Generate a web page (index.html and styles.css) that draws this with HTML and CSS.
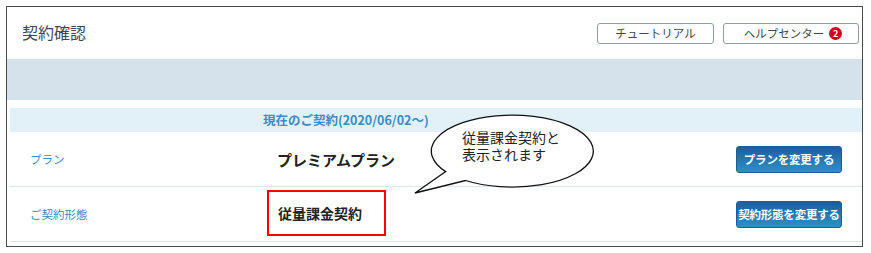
FILE: index.html
```html
<!DOCTYPE html>
<html lang="ja">
<head>
<meta charset="utf-8">
<title>契約確認</title>
<link rel="stylesheet" href="styles.css">
</head>
<body>
<div class="panel">
  <div class="top">
    <h1 class="title">契約確認</h1>
    <div class="actions">
      <button class="btn-outline tut">チュートリアル</button>
      <button class="btn-outline help">ヘルプセンター<span class="badge">2</span></button>
    </div>
  </div>
  <div class="band"></div>
  <div class="table">
    <div class="thead">現在のご契約(2020/06/02～)</div>
    <div class="row">
      <div class="label">プラン</div>
      <div class="value"><span class="plan">プレミアムプラン</span></div>
      <div class="cell-btn"><button class="btn-blue">プランを変更する</button></div>
    </div>
    <div class="row">
      <div class="label">ご契約形態</div>
      <div class="value"><span class="highlight">従量課金契約</span></div>
      <div class="cell-btn"><button class="btn-blue">契約形態を変更する</button></div>
    </div>
  </div>
  <svg class="bubble" width="192" height="88" viewBox="0 0 192 88">
    <path d="M 35.7,59.6 A 81 36 0 1 1 55.5,68.5 L 5,81 Z" fill="#fff" stroke="#111" stroke-width="1.3" stroke-linejoin="miter"/>
  </svg>
  <div class="bubble-text">従量課金契約と<br>表示されます</div>
</div>
</body>
</html>
```

FILE: styles.css
```css
* { box-sizing: border-box; }
html, body { margin: 0; padding: 0; background: #fff; }
body {
  padding: 6px 0 0 6px;
  font-family: "Noto Sans CJK JP", "Noto Sans", sans-serif;
}
.panel {
  position: relative;
  width: 857px;
  height: 241px;
  border: 1px solid #4a4a4a;
  background: #fff;
}
.top {
  height: 52px;
  display: flex;
  justify-content: space-between;
  align-items: flex-start;
  padding: 0 3px 0 15px;
}
.title {
  margin: 15px 0 0 0;
  font-size: 16px;
  line-height: 20px;
  font-weight: 400;
  color: #3a4856;
}
.actions {
  display: flex;
  gap: 9px;
  margin-top: 16px;
}
.btn-outline {
  height: 21px;
  border: 1px solid #8d9ba6;
  border-radius: 3px;
  background: #fff;
  color: #444;
  font-family: inherit;
  font-size: 11.5px;
  line-height: 19px;
  padding: 0;
  display: flex;
  align-items: center;
  justify-content: center;
}
.tut { width: 117px; }
.help { width: 136px; padding-left: 4px; }
.badge {
  display: inline-flex;
  align-items: center;
  justify-content: center;
  width: 13px;
  height: 13px;
  margin-left: 5px;
  border-radius: 50%;
  background: #d0021b;
  color: #fff;
  font-size: 9px;
  font-weight: 700;
  line-height: 1;
}
.band {
  height: 41px;
  background: #d6e2eb;
  margin-bottom: 8px;
}
.table { margin-left: 3px; }
.thead {
  height: 24px;
  line-height: 24px;
  background: #e2f0f8;
  padding-left: 253px;
  font-size: 12.5px;
  font-weight: 700;
  color: #3c8cc2;
}
.row {
  height: 55px;
  display: grid;
  grid-template-columns: 257px 1fr auto;
  align-items: center;
  border-bottom: 1px solid #dde6ea;
}
.label {
  padding-left: 20px;
  font-size: 11.5px;
  color: #3b8ac4;
}
.plan {
  margin-left: 10px;
  font-size: 15px;
  font-weight: 700;
  color: #222;
}
.highlight {
  display: inline-block;
  width: 119px;
  height: 46px;
  border: 2px solid #f00;
  padding: 11px 0 0 9px;
  font-size: 14px;
  line-height: 20px;
  font-weight: 700;
  color: #222;
  margin-top: -2px;
}
.cell-btn { padding-right: 20px; }
.btn-blue {
  width: 106px;
  height: 27px;
  padding: 0;
  border: 1px solid #1d5c97;
  border-radius: 3px;
  background: linear-gradient(#1f5d9d, #2d90c6);
  color: #fff;
  font-family: inherit;
  font-size: 11.5px;
  font-weight: 700;
  letter-spacing: -0.2px;
  white-space: nowrap;
}
.bubble {
  position: absolute;
  left: 403px;
  top: 105px;
}
.bubble-text {
  position: absolute;
  left: 455px;
  top: 122px;
  font-size: 14px;
  line-height: 17px;
  color: #222;
}
```
